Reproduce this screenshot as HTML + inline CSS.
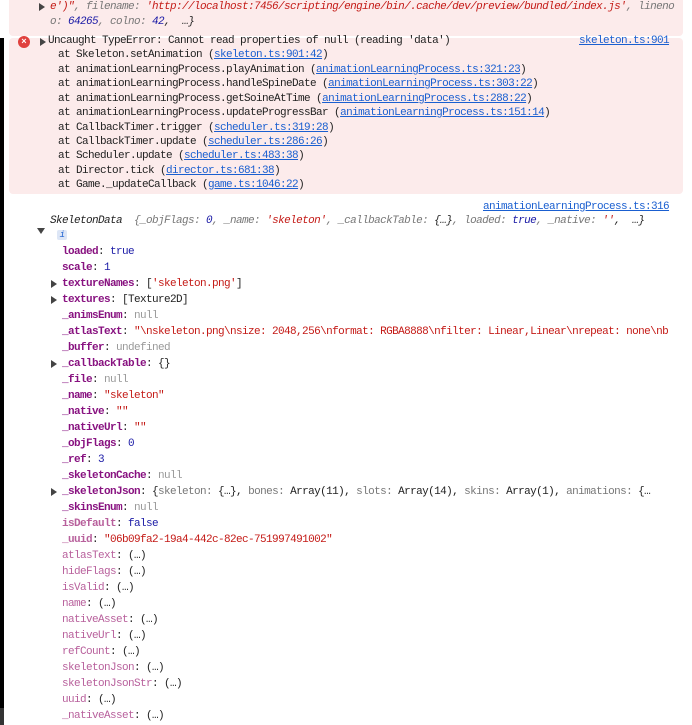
<!DOCTYPE html>
<html><head><meta charset="utf-8"><style>
body{margin:0;width:692px;height:725px;background:#fff;position:relative;overflow:hidden;font-family:"Liberation Mono","Noto Sans CJK SC",monospace;font-size:11px;letter-spacing:-0.6px;color:#222}
.strip{position:absolute;left:0;top:38px;width:4px;height:670px;background:#000}
.strip2{position:absolute;left:0;top:708px;width:4px;height:17px;background:#333}
.box{position:absolute;left:9px;right:9px;background:#fcebeb;border-radius:4px}
.l{position:absolute;white-space:pre;line-height:14px}
a{color:#1a5fd0;text-decoration:underline}
.tri{position:absolute;width:0;height:0;border-top:4px solid transparent;border-bottom:4px solid transparent;border-left:6px solid #444}
.trid{position:absolute;width:0;height:0;border-left:4px solid transparent;border-right:4px solid transparent;border-top:6px solid #444}
.k{color:#881280;font-weight:bold}
.n{color:#b8609c}
.s{color:#c41a16}
.b{color:#1a1aa6}
.g{color:#999}
.gy{color:#777}
.i{font-style:italic}
</style></head><body>
<div class="strip"></div><div class="strip2"></div>
<div class="box" style="top:-4px;height:40px"></div>
<div class="tri" style="left:39px;top:3px"></div>
<div class="l i" style="left:50px;top:0px"><span class="s">e')"</span><span class="gy">, filename: </span><span class="s">'http://localhost:7456/scripting/engine/bin/.cache/dev/preview/bundled/index.js'</span><span class="gy">, lineno</span></div>
<div class="l i" style="left:50px;top:15px"><span class="gy">o: </span><span class="b">64265</span><span class="gy">, colno: </span><span class="b">42</span>,  …}</div>

<div class="box" style="top:38px;height:156px"></div>
<div style="position:absolute;left:18px;top:36px;width:12px;height:12px;border-radius:50%;background:#e0413e;color:#fff;font-size:9px;line-height:12px;text-align:center;letter-spacing:0;font-weight:bold">×</div>
<div class="tri" style="left:40px;top:38px"></div>
<div class="l" style="left:48px;top:34px">Uncaught TypeError: Cannot read properties of null (reading 'data')</div>
<div class="l" style="left:579px;top:34px"><a>skeleton.ts:901</a></div>
<div class="l" style="left:58px;top:48px">at Skeleton.setAnimation (<a>skeleton.ts:901:42</a>)</div>
<div class="l" style="left:58px;top:63px">at animationLearningProcess.playAnimation (<a>animationLearningProcess.ts:321:23</a>)</div>
<div class="l" style="left:58px;top:77px">at animationLearningProcess.handleSpineDate (<a>animationLearningProcess.ts:303:22</a>)</div>
<div class="l" style="left:58px;top:92px">at animationLearningProcess.getSoineAtTime (<a>animationLearningProcess.ts:288:22</a>)</div>
<div class="l" style="left:58px;top:106px">at animationLearningProcess.updateProgressBar (<a>animationLearningProcess.ts:151:14</a>)</div>
<div class="l" style="left:58px;top:121px">at CallbackTimer.trigger (<a>scheduler.ts:319:28</a>)</div>
<div class="l" style="left:58px;top:135px">at CallbackTimer.update (<a>scheduler.ts:286:26</a>)</div>
<div class="l" style="left:58px;top:149px">at Scheduler.update (<a>scheduler.ts:483:38</a>)</div>
<div class="l" style="left:58px;top:164px">at Director.tick (<a>director.ts:681:38</a>)</div>
<div class="l" style="left:58px;top:178px">at Game._updateCallback (<a>game.ts:1046:22</a>)</div>

<div class="l" style="left:483px;top:200px"><a>animationLearningProcess.ts:316</a></div>
<div class="trid" style="left:37px;top:238px;transform:translateY(-10px)"></div>
<div class="l i" style="left:50px;top:214px">SkeletonData  <span class="gy">{_objFlags: </span><span class="b">0</span><span class="gy">, _name: </span><span class="s">'skeleton'</span><span class="gy">, _callbackTable: </span>{…}<span class="gy">, loaded: </span><span class="b">true</span><span class="gy">, _native: </span><span class="s">''</span>,  …}</div>
<div style="position:absolute;left:57px;top:230px;width:10px;height:10px;background:#dde6f6;border-radius:2px;color:#1a5fd0;font-size:9px;line-height:10px;text-align:center;font-style:italic">i</div>

<div class="l" style="left:62px;top:245px"><span class="k">loaded</span>: <span class="b">true</span></div>
<div class="l" style="left:62px;top:261px"><span class="k">scale</span>: <span class="b">1</span></div>
<div class="tri" style="left:51px;top:280px"></div>
<div class="l" style="left:62px;top:277px"><span class="k">textureNames</span>: [<span class="s">'skeleton.png'</span>]</div>
<div class="tri" style="left:51px;top:296px"></div>
<div class="l" style="left:62px;top:293px"><span class="k">textures</span>: [Texture2D]</div>
<div class="l" style="left:62px;top:309px"><span class="k">_animsEnum</span>: <span class="g">null</span></div>
<div class="l" style="left:62px;top:325px"><span class="k">_atlasText</span>: <span class="s">"\nskeleton.png\nsize: 2048,256\nformat: RGBA8888\nfilter: Linear,Linear\nrepeat: none\nb</span></div>
<div class="l" style="left:62px;top:341px"><span class="k">_buffer</span>: <span class="g">undefined</span></div>
<div class="tri" style="left:51px;top:360px"></div>
<div class="l" style="left:62px;top:357px"><span class="k">_callbackTable</span>: {}</div>
<div class="l" style="left:62px;top:373px"><span class="k">_file</span>: <span class="g">null</span></div>
<div class="l" style="left:62px;top:389px"><span class="k">_name</span>: <span class="s">"skeleton"</span></div>
<div class="l" style="left:62px;top:405px"><span class="k">_native</span>: <span class="s">""</span></div>
<div class="l" style="left:62px;top:421px"><span class="k">_nativeUrl</span>: <span class="s">""</span></div>
<div class="l" style="left:62px;top:437px"><span class="k">_objFlags</span>: <span class="b">0</span></div>
<div class="l" style="left:62px;top:453px"><span class="k">_ref</span>: <span class="b">3</span></div>
<div class="l" style="left:62px;top:469px"><span class="k">_skeletonCache</span>: <span class="g">null</span></div>
<div class="tri" style="left:51px;top:488px"></div>
<div class="l" style="left:62px;top:485px"><span class="k">_skeletonJson</span>: {<span class="gy">skeleton: </span>{…}, <span class="gy">bones: </span>Array(11), <span class="gy">slots: </span>Array(14), <span class="gy">skins: </span>Array(1), <span class="gy">animations: </span>{…</div>
<div class="l" style="left:62px;top:501px"><span class="k">_skinsEnum</span>: <span class="g">null</span></div>
<div class="l" style="left:62px;top:517px"><span class="k" style="color:#b8609c">isDefault</span>: <span class="b">false</span></div>
<div class="l" style="left:62px;top:533px"><span class="k" style="color:#b8609c">_uuid</span>: <span class="s">"06b09fa2-19a4-442c-82ec-751997491002"</span></div>
<div class="l" style="left:62px;top:549px"><span class="n">atlasText</span>: (…)</div>
<div class="l" style="left:62px;top:565px"><span class="n">hideFlags</span>: (…)</div>
<div class="l" style="left:62px;top:581px"><span class="n">isValid</span>: (…)</div>
<div class="l" style="left:62px;top:597px"><span class="n">name</span>: (…)</div>
<div class="l" style="left:62px;top:613px"><span class="n">nativeAsset</span>: (…)</div>
<div class="l" style="left:62px;top:629px"><span class="n">nativeUrl</span>: (…)</div>
<div class="l" style="left:62px;top:645px"><span class="n">refCount</span>: (…)</div>
<div class="l" style="left:62px;top:661px"><span class="n">skeletonJson</span>: (…)</div>
<div class="l" style="left:62px;top:677px"><span class="n">skeletonJsonStr</span>: (…)</div>
<div class="l" style="left:62px;top:693px"><span class="n">uuid</span>: (…)</div>
<div class="l" style="left:62px;top:709px"><span class="n">_nativeAsset</span>: (…)</div>
</body></html>
